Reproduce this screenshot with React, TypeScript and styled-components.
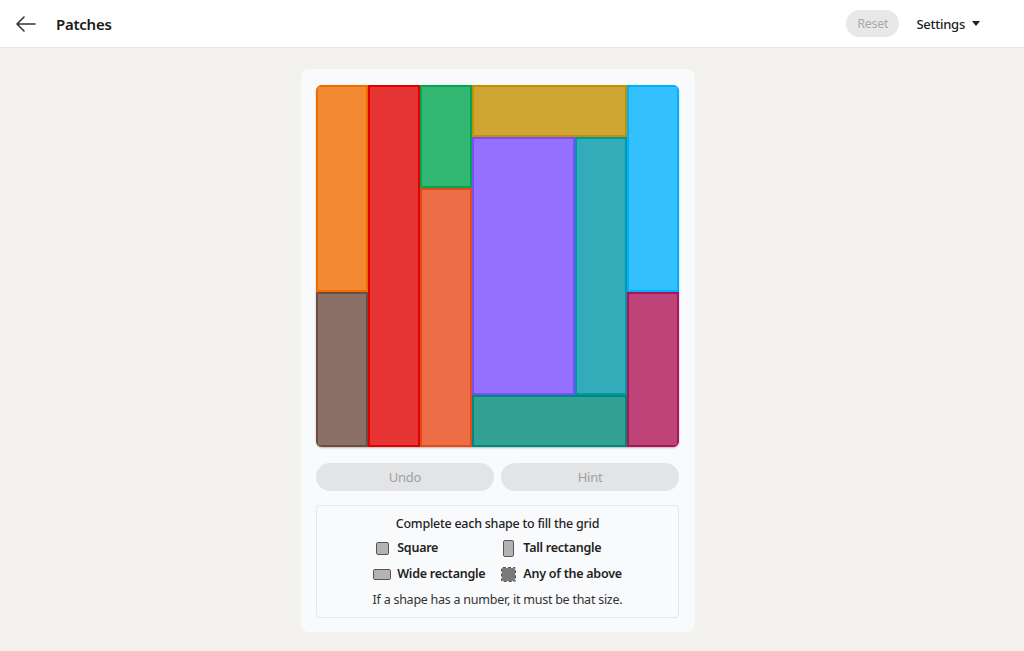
import styled, { createGlobalStyle } from 'styled-components'

const GlobalStyle = createGlobalStyle`
  html, body {
    margin: 0;
    padding: 0;
    background: #f2f1ee;
    font-family: 'Noto Sans', 'Open Sans', sans-serif;
    letter-spacing: -0.25px;
    color: #1f1f1f;
  }
  button { letter-spacing: inherit; }
  * { box-sizing: border-box; }
`

type Piece = { col: number; row: number; w: number; h: number; color: string }

const PIECES: Piece[] = [
  { col: 1, row: 1, w: 1, h: 4, color: '#ef6c00' },
  { col: 1, row: 5, w: 1, h: 3, color: '#6d4c41' },
  { col: 2, row: 1, w: 1, h: 7, color: '#e00000' },
  { col: 3, row: 1, w: 1, h: 2, color: '#00a651' },
  { col: 3, row: 3, w: 1, h: 5, color: '#e64a19' },
  { col: 4, row: 1, w: 3, h: 1, color: '#c39000' },
  { col: 4, row: 2, w: 2, h: 5, color: '#7c4dff' },
  { col: 6, row: 2, w: 1, h: 5, color: '#0097a7' },
  { col: 7, row: 1, w: 1, h: 4, color: '#00b0ff' },
  { col: 7, row: 5, w: 1, h: 3, color: '#ad1457' },
  { col: 4, row: 7, w: 3, h: 1, color: '#00897b' },
]

const Page = styled.div`
  min-height: 100vh;
  display: flex;
  flex-direction: column;
`

const TopBar = styled.header`
  height: 48px;
  background: #ffffff;
  border-bottom: 1px solid #e9e7e2;
  display: flex;
  align-items: center;
  padding: 0 44px 0 16px;
`

const BackButton = styled.button`
  background: none;
  border: none;
  padding: 0;
  width: 22px;
  height: 24px;
  display: flex;
  align-items: center;
  color: #333;
  cursor: pointer;
`

const Title = styled.h1`
  margin: 0 0 0 18px;
  font-size: 15px;
  font-weight: 600;
  color: #1a1a1a;
  flex: 1;
`

const ResetButton = styled.button`
  font-family: inherit;
  height: 27px;
  padding: 0 11px;
  border-radius: 14px;
  border: none;
  background: #e8e8e8;
  color: #a8a8a8;
  font-size: 12.5px;
  margin-right: 17px;
`

const SettingsButton = styled.button`
  font-family: inherit;
  background: none;
  border: none;
  display: flex;
  align-items: center;
  gap: 7px;
  font-size: 13px;
  font-weight: 500;
  color: #222;
  padding: 0;

  &::after {
    content: '';
    border-left: 4px solid transparent;
    border-right: 4px solid transparent;
    border-top: 5px solid #222;
  }
`

const Main = styled.main`
  flex: 1;
  display: flex;
  justify-content: center;
  padding: 21px 28px 0 0;
`

const Card = styled.section`
  width: 394px;
  background: #f9fafc;
  border-radius: 8px;
  padding: 16px 16px 14px 15px;
  display: flex;
  flex-direction: column;
  align-self: flex-start;
`

const Board = styled.div`
  width: 363px;
  height: 362px;
  display: grid;
  grid-template-columns: repeat(7, 1fr);
  grid-template-rows: repeat(7, 1fr);
  border-radius: 6px;
  overflow: hidden;
  background: #ffffff;
  box-shadow: 0 1px 2px rgba(0, 0, 0, 0.25);
`

const Patch = styled.div<{ $color: string }>`
  border: 2px solid ${(p) => p.$color};
  background: color-mix(in srgb, ${(p) => p.$color} 80%, white);
`

const Controls = styled.div`
  display: grid;
  grid-template-columns: 1fr 1fr;
  gap: 7px;
  margin-top: 16px;
`

const PillButton = styled.button`
  font-family: inherit;
  height: 28px;
  border-radius: 14px;
  border: none;
  background: #e3e4e6;
  color: #a0a0a0;
  font-size: 13px;
`

const Legend = styled.div`
  margin-top: 14px;
  border: 1px solid #e4e6ea;
  border-radius: 4px;
  padding: 9px 12px 8px;
  display: flex;
  flex-direction: column;
  align-items: center;
  font-size: 12.5px;
`

const LegendTitle = styled.div`
  font-weight: 500;
  line-height: 18px;
  color: #1f1f1f;
`

const LegendGrid = styled.div`
  display: grid;
  grid-template-columns: auto auto;
  column-gap: 14px;
  row-gap: 8px;
  margin-top: 6px;
`

const LegendItem = styled.div`
  display: flex;
  align-items: center;
  gap: 6px;
  font-weight: 600;
  line-height: 18px;
  color: #222;
`

const IconSlot = styled.span`
  width: 18px;
  display: flex;
  justify-content: center;
`

const ShapeIcon = styled.span<{ $w: number; $h: number; $any?: boolean }>`
  width: ${(p) => p.$w}px;
  height: ${(p) => p.$h}px;
  border-radius: 2px;
  border: 1px ${(p) => (p.$any ? 'dashed' : 'solid')} #555;
  background: ${(p) => (p.$any ? '#7a7a7a' : '#b3b3b3')};
  background-clip: padding-box;
`

const Note = styled.div`
  margin-top: 8px;
  line-height: 18px;
  color: #333;
`

export default function App() {
  return (
    <Page>
      <GlobalStyle />
      <TopBar>
        <BackButton aria-label="Back">
          <svg width="20" height="24" viewBox="0 0 20 24" fill="none" stroke="currentColor" strokeWidth="1.6" strokeLinecap="round" strokeLinejoin="round">
            <path d="M8 5L1 12l7 7M1 12h18" />
          </svg>
        </BackButton>
        <Title>Patches</Title>
        <ResetButton disabled>Reset</ResetButton>
        <SettingsButton>Settings</SettingsButton>
      </TopBar>
      <Main>
        <Card>
          <Board>
            {PIECES.map((p, i) => (
              <Patch
                key={i}
                $color={p.color}
                style={{ gridColumn: `${p.col} / span ${p.w}`, gridRow: `${p.row} / span ${p.h}` }}
              />
            ))}
          </Board>
          <Controls>
            <PillButton disabled>Undo</PillButton>
            <PillButton disabled>Hint</PillButton>
          </Controls>
          <Legend>
            <LegendTitle>Complete each shape to fill the grid</LegendTitle>
            <LegendGrid>
              <LegendItem>
                <IconSlot><ShapeIcon $w={13} $h={13} /></IconSlot>
                Square
              </LegendItem>
              <LegendItem>
                <IconSlot><ShapeIcon $w={11} $h={17} /></IconSlot>
                Tall rectangle
              </LegendItem>
              <LegendItem>
                <IconSlot><ShapeIcon $w={18} $h={11} /></IconSlot>
                Wide rectangle
              </LegendItem>
              <LegendItem>
                <IconSlot><ShapeIcon $w={15} $h={15} $any /></IconSlot>
                Any of the above
              </LegendItem>
            </LegendGrid>
            <Note>If a shape has a number, it must be that size.</Note>
          </Legend>
        </Card>
      </Main>
    </Page>
  )
}
